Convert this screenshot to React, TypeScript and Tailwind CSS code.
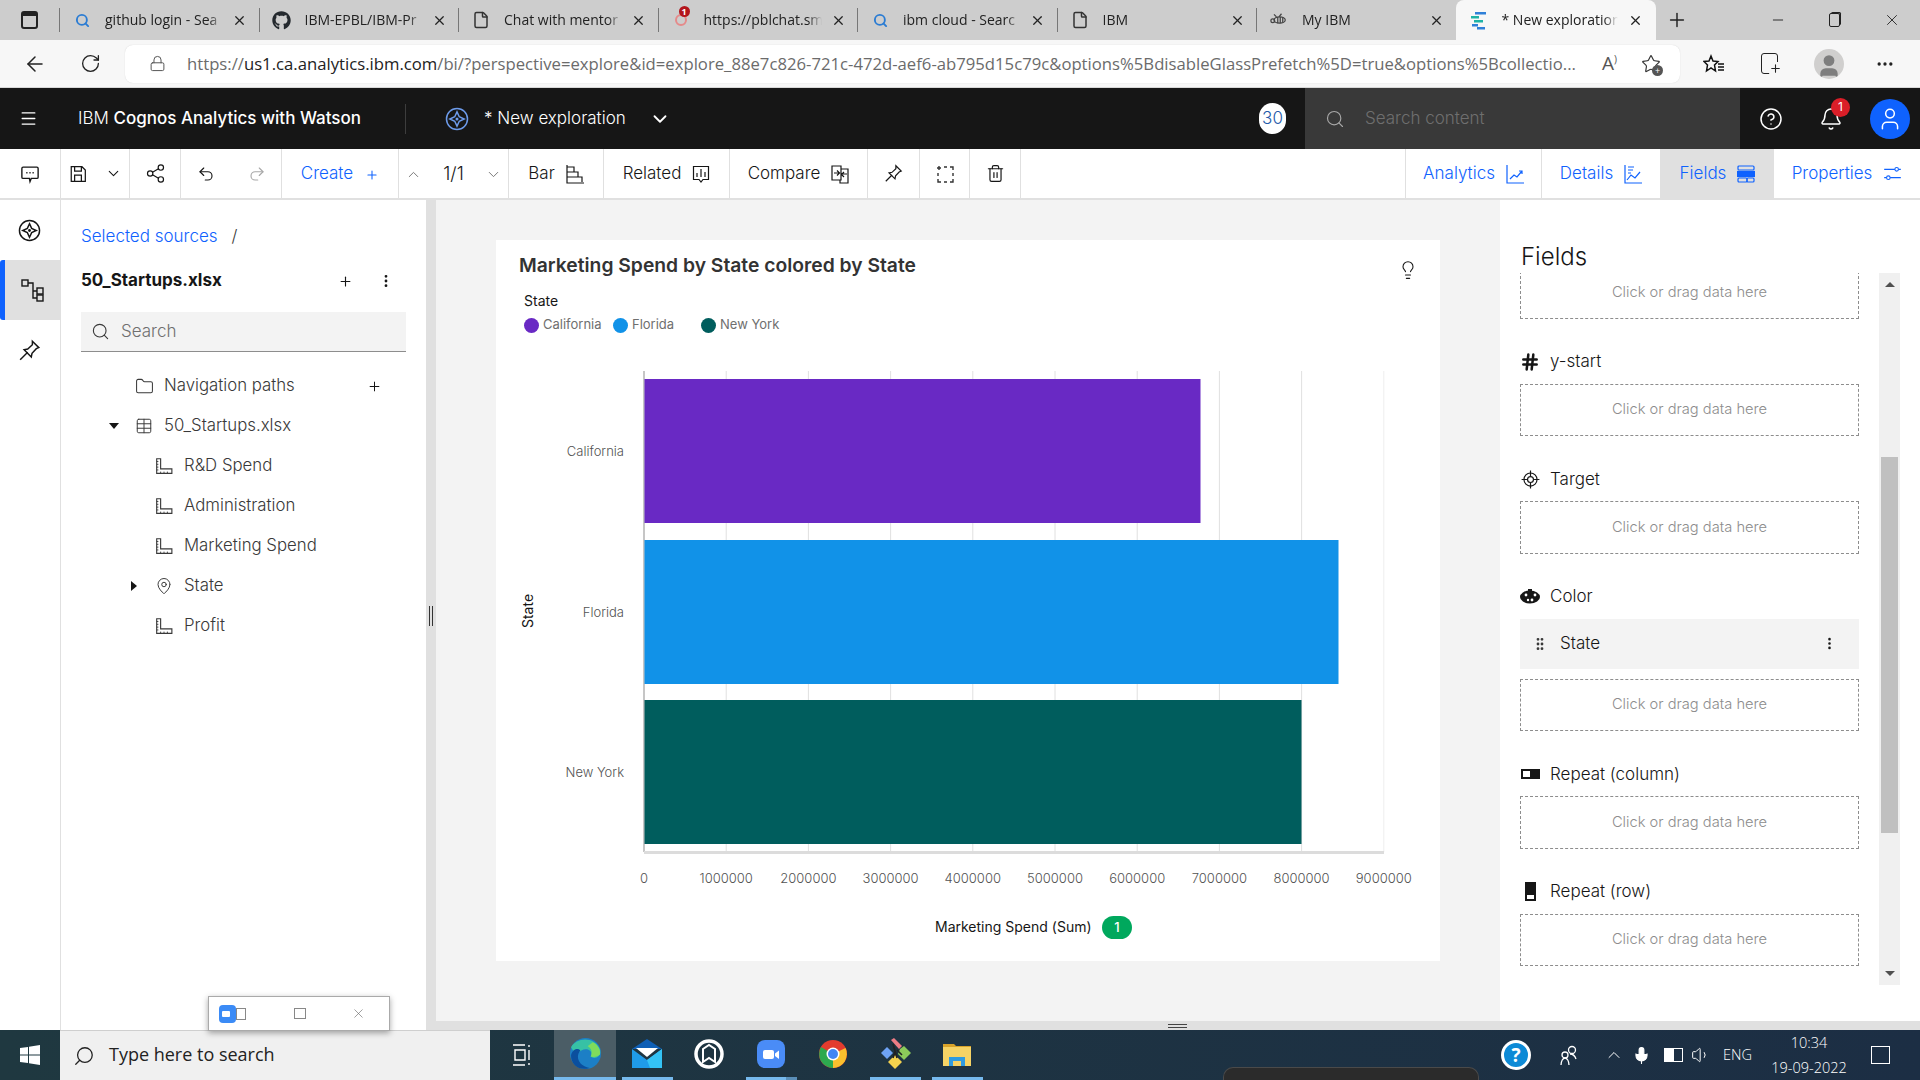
import { ChevronDown, ChevronUp, Plus, Search, X, Minus, ArrowLeft, RotateCw, Lock, Star, MoreHorizontal, Undo2, Redo2, Trash2, CircleHelp, Bell, User, Menu, MoreVertical, GripVertical, Folder, Table, MapPin, File, Lightbulb, Hash, Mic, Volume1 } from "lucide-react";
import { FaGithub } from "react-icons/fa";
import type { ReactNode } from "react";

const Ic = ({ size = 20, children, className = "" }: { size?: number; children: ReactNode; className?: string }) => (
  <svg width={size} height={size} viewBox="0 0 32 32" fill="none" stroke="currentColor" strokeWidth="2" className={className}>
    {children}
  </svg>
);

const WatsonIcon = ({ size = 24, className = "" }: { size?: number; className?: string }) => (
  <Ic size={size} className={className}>
    <circle cx="16" cy="16" r="14" />
    <path d="M16 6.500 L19 13 L25.500 16 L19 19 L16 25.500 L13 19 L6.500 16 L13 13 Z" />
    <circle cx="16" cy="16" r="1" fill="currentColor" />
  </Ic>
);

const PinIcon = ({ size = 22 }: { size?: number }) => (
  <Ic size={size}>
    <path d="M20 3l9 9-3.500 1.500-6 6.500-1 5-10-10 5-1 6.500-6z" />
    <path d="M13.500 18.500 3 29" />
  </Ic>
);

const RulerIcon = () => (
  <Ic size={18} className="text-[#393939]">
    <path d="M3 3h7v18h20v8H3z" />
    <path d="M3 8h3M3 13h3M3 18h3M3 23h3M10 29v-3M16 29v-3M22 29v-3" strokeWidth="1.6" />
  </Ic>
);

const tabs = [
  { title: "github login - Sea", icon: <Search size={15} strokeWidth={3} className="text-[#2b7cd3]" /> },
  { title: "IBM-EPBL/IBM-Pr", icon: <FaGithub size={19} className="text-[#24292e]" /> },
  { title: "Chat with mentor", icon: <File size={18} className="text-[#333]" /> },
  {
    title: "https://pblchat.sm",
    icon: (
      <span className="relative flex h-5 w-5 items-center justify-center">
        <span className="h-3 w-3 rounded-full border-2 border-[#e58a8a]" />
        <span className="absolute -top-1 left-2 flex h-[11px] w-[11px] items-center justify-center rounded-full bg-[#b3161c] text-[9px] font-bold leading-none text-white">1</span>
      </span>
    ),
  },
  { title: "ibm cloud - Searc", icon: <Search size={15} strokeWidth={3} className="text-[#2b7cd3]" /> },
  { title: "IBM", icon: <File size={18} className="text-[#333]" /> },
  {
    title: "My IBM",
    icon: (
      <Ic size={20} className="text-[#444]">
        <ellipse cx="17" cy="16" rx="9" ry="5" />
        <path d="M14 11v10M18 11v10M22 12v8M12 11 8 7M16 11l4-5" />
        <circle cx="6" cy="17" r="3" />
      </Ic>
    ),
  },
];

function TabStrip() {
  return (
    <div className="flex h-10 shrink-0 items-stretch bg-[#cdcdcd] font-['Open_Sans',sans-serif] text-[14px] text-[#222]">
      <div className="flex w-[59px] items-center justify-center">
        <span className="h-[18px] w-[17px] rounded-[3px] border-2 border-[#222] border-t-[5px]" />
      </div>
      {tabs.map((t) => (
        <div key={t.title} className="relative flex w-[199.5px] items-center">
          <span className="absolute left-0 top-[8px] h-6 w-px bg-[#777]" />
          <span className="flex w-[46px] justify-center">{t.icon}</span>
          <span className="-mt-[1px] w-[118px] overflow-hidden whitespace-nowrap [mask-image:linear-gradient(to_right,black_88%,transparent)]">{t.title}</span>
          <X size={15} className="ml-[9px]" />
        </div>
      ))}
      <div className="flex w-[200px] items-center rounded-t-lg bg-[#f7f7f7]">
        <span className="flex w-[46px] justify-center">
          <svg width="20" height="20" viewBox="0 0 20 20">
            <rect x="6" y="2" width="11" height="2.500" fill="#2f80d8" />
            <rect x="2" y="6" width="8" height="2.500" fill="#1eb3a6" />
            <rect x="5" y="10" width="9" height="2.500" fill="#1eb3a6" />
            <rect x="3" y="14" width="6" height="2.500" fill="#2f80d8" />
            <rect x="8" y="17" width="8" height="2.500" fill="#2f80d8" />
          </svg>
        </span>
        <span className="-mt-[1px] w-[116px] overflow-hidden whitespace-nowrap [mask-image:linear-gradient(to_right,black_88%,transparent)]">* New exploration</span>
        <X size={15} className="ml-[10px]" />
      </div>
      <div className="flex w-[42px] items-center justify-center">
        <Plus size={22} strokeWidth={1.6} />
      </div>
      <div className="ml-auto flex items-center">
        <span className="flex w-[57px] justify-center"><Minus size={16} strokeWidth={1.4} /></span>
        <span className="flex w-[57px] justify-center">
          <span className="h-[14px] w-[11px] rounded-[2px] border border-[#222] shadow-[1.500px_-1.500px_0_-0.500px_#222]" />
        </span>
        <span className="flex w-[57px] justify-center"><X size={18} strokeWidth={1.2} /></span>
      </div>
    </div>
  );
}

function AddressBar() {
  return (
    <div className="flex h-12 shrink-0 items-center border-b border-[#d8d8d8] bg-[#f7f7f7] font-['Open_Sans',sans-serif]">
      <span className="flex w-[70px] justify-center"><ArrowLeft size={24} strokeWidth={1.5} className="text-[#222]" /></span>
      <span className="flex w-[40px] justify-center"><RotateCw size={21} strokeWidth={1.5} className="text-[#222]" /></span>
      <div className="ml-[15px] flex h-[38px] w-[1555px] items-center rounded-lg bg-white shadow-[0_0_1px_#ccc]">
        <Lock size={17} strokeWidth={1.4} className="ml-[24px] text-[#555]" />
        <div className="ml-[21px] w-[1395px] overflow-hidden whitespace-nowrap text-[16.700px] text-[#6b6b6b]">
          https://<span className="text-[#222]">us1.ca.analytics.ibm.com</span>/bi/?perspective=explore&amp;id=explore_88e7c826-721c-472d-aef6-ab795d15c79c&amp;options%5BdisableGlassPrefetch%5D=true&amp;options%5Bcollectio...
        </div>
        <span className="ml-[20px] text-[19px] text-[#555]">A<span className="align-super text-[10px]">)</span></span>
        <span className="relative ml-[24px]">
          <Star size={20} strokeWidth={1.4} className="text-[#333]" />
          <span className="absolute -bottom-[2px] -right-[2px] flex h-[11px] w-[11px] items-center justify-center rounded-full bg-[#555] text-[9px] leading-none text-white">+</span>
        </span>
      </div>
      <span className="ml-[13px] flex w-[42px] justify-center">
        <svg width="22" height="22" viewBox="0 0 22 22" fill="none" stroke="#111" strokeWidth="1.500">
          <path d="M8 3l2 5 5 .5-3.500 3.500 1 6-4.500-3-4.500 3 1-6L1 8.500 6 8z" />
          <path d="M15 11h6M15 14h6M15 17h6" />
        </svg>
      </span>
      <span className="ml-[13px] flex w-[42px] justify-center">
        <span className="relative h-[21px] w-[17px] rounded-[3px] border-[1.500px] border-[#222]">
          <Plus size={13} className="absolute -bottom-[2px] -right-[5px] rounded-[2px] bg-[#f7f7f7] text-[#222]" />
        </span>
      </span>
      <span className="ml-[18px] flex h-[30px] w-[42px] justify-center overflow-hidden">
        <span className="flex h-[30px] w-[30px] items-end justify-center overflow-hidden rounded-full bg-[#d0cfce]">
          <User size={26} fill="#7e7e7e" stroke="#7e7e7e" />
        </span>
      </span>
      <span className="ml-[14px] flex w-[42px] justify-center"><MoreHorizontal size={20} className="text-[#222]" /></span>
    </div>
  );
}

function AppHeader() {
  return (
    <div className="flex h-[61px] shrink-0 items-center bg-[#161616] text-white">
      <span className="flex w-[56px] justify-center"><Menu size={19} strokeWidth={1.6} /></span>
      <div className="ml-[22px] w-[327px] whitespace-nowrap text-[17px]">
        <span className="font-light">IBM </span><span className="font-medium">Cognos Analytics with Watson</span>
      </div>
      <span className="h-[30px] w-px bg-[#3d3d3d]" />
      <span className="ml-[39px] flex w-[24px] justify-center"><WatsonIcon size={24} className="text-[#6d9bea]" /></span>
      <span className="ml-[15px] w-[163px] whitespace-nowrap text-[17px] font-light">* New exploration</span>
      <ChevronDown size={22} strokeWidth={2} className="ml-[2px]" />
      <div className="ml-auto flex h-full items-center">
        <span className="flex h-[31px] w-[27px] items-center justify-center rounded-full bg-white text-[17px] font-light text-[#2459a9]">30</span>
        <div className="ml-[19px] flex h-full w-[435px] items-center bg-[#393939] text-[17px] font-light text-[#6f6f6f]">
          <Search size={20} strokeWidth={1.4} className="ml-[20px] text-[#a8a8a8]" />
          <span className="ml-[20px] mt-[1px]">Search content</span>
        </div>
        <span className="flex w-[62px] justify-center"><CircleHelp size={24} strokeWidth={1.5} /></span>
        <span className="relative flex w-[58px] justify-center">
          <Bell size={24} strokeWidth={1.5} />
          <span className="absolute -top-[9px] left-[29px] flex h-[19px] w-[19px] items-center justify-center rounded-full bg-[#da1e28] text-[12px]">1</span>
        </span>
        <span className="ml-[10px] mr-[10px] flex h-10 w-10 items-center justify-center rounded-full bg-[#0f62fe]">
          <User size={26} strokeWidth={1.4} />
        </span>
      </div>
    </div>
  );
}

const Cell = ({ w, children, className = "" }: { w: string; children?: ReactNode; className?: string }) => (
  <div className={`flex h-full shrink-0 items-center justify-center border-r border-[#e0e0e0] text-[17px] font-light ${w} ${className}`}>{children}</div>
);

function Toolbar() {
  return (
    <div className="flex h-[51px] shrink-0 items-stretch border-b-2 border-[#e0e0e0] bg-white text-[#161616]">
      <Cell w="w-[61px]">
        <Ic size={20}>
          <path d="M5 5h22a2 2 0 0 1 2 2v14a2 2 0 0 1-2 2H18l-2 5-1-5H5a2 2 0 0 1-2-2V7a2 2 0 0 1 2-2z" strokeWidth="2.200" />
          <path d="M10 14h2M15 14h2M20 14h2" strokeWidth="2.400" />
        </Ic>
      </Cell>
      <Cell w="w-[69px]" className="gap-[18px]">
        <Ic size={18}>
          <path d="M4 3h19l6 6v20H4zM10 3v8h12V3M10 29V18h12v11" strokeWidth="2.200" />
        </Ic>
        <ChevronDown size={17} strokeWidth={1.5} />
      </Cell>
      <Cell w="w-[51px]">
        <Ic size={19}>
          <circle cx="7" cy="16" r="4.500" /><circle cx="25" cy="6" r="4.500" /><circle cx="25" cy="26" r="4.500" />
          <path d="M11 14l10-6M11 18l10 6" />
        </Ic>
      </Cell>
      <Cell w="w-[101px]" className="gap-[33px]">
        <Undo2 size={18} strokeWidth={1.5} />
        <Redo2 size={18} strokeWidth={1.5} className="text-[#a8a8a8]" />
      </Cell>
      <Cell w="w-[117px]" className="gap-[12px] text-[#0f62fe]">
        <span>Create</span><Plus size={14} strokeWidth={1.8} className="mt-[3px]" />
      </Cell>
      <Cell w="w-[110px]" className="gap-[21px]">
        <ChevronUp size={17} strokeWidth={1.3} className="mt-[2px] text-[#6f6f6f]" />
        <span className="text-[18px]">1/1</span>
        <ChevronDown size={17} strokeWidth={1.3} className="mt-[2px] text-[#6f6f6f]" />
      </Cell>
      <Cell w="w-[95px]" className="gap-[11px]">
        <span className="mt-[1px]">Bar</span>
        <svg width="18" height="20" viewBox="0 0 18 20" fill="none" stroke="#161616" strokeWidth="1.200">
          <path d="M1 1v18h17M1 3h7v5H1M1 8h11v5H1M1 13h15v5" />
        </svg>
      </Cell>
      <Cell w="w-[126px]" className="gap-[11px]">
        <span className="mt-[1px]">Related</span>
        <svg width="18" height="20" viewBox="0 0 18 20" fill="none" stroke="#161616" strokeWidth="1.200">
          <path d="M1.500 2.500h15v13H11l-2 2.500-2-2.500H1.500zM5 13V9M9 13V5M13 13V8" />
        </svg>
      </Cell>
      <Cell w="w-[138px]" className="gap-[11px]">
        <span className="mt-[1px]">Compare</span>
        <svg width="18" height="20" viewBox="0 0 18 20" fill="none" stroke="#161616" strokeWidth="1.200">
          <path d="M1 2h9v14H1zM10 5h7v14H9v-3M3 9h5M6 6.500 8.500 9 6 11.500M16 10h-5M13 8l-2.500 2.500L13 13" />
        </svg>
      </Cell>
      <Cell w="w-[52px]"><PinIcon size={19} /></Cell>
      <Cell w="w-[50px]">
        <svg width="18" height="18" viewBox="0 0 18 18" fill="none" stroke="#333" strokeWidth="1.400">
          <path d="M3 1v4M1 3h4M8 2h3M14 2h3v3M17 8v3M17 14v3h-3M11 17H8M5 17H2v-3M2 11V8" />
        </svg>
      </Cell>
      <Cell w="w-[51px]"><Trash2 size={19} strokeWidth={1.5} /></Cell>
      <div className="flex-1" />
      <Cell w="w-[137px]" className="gap-[11px] border-l text-[#0f62fe]">
        <span>Analytics</span>
        <svg width="18" height="20" viewBox="0 0 18 20" fill="none" stroke="#0f62fe" strokeWidth="1.200">
          <path d="M1 1v18h17M4 15l4-4 3 2 5-6M13 7h3v3" />
        </svg>
      </Cell>
      <Cell w="w-[119px]" className="gap-[11px] text-[#0f62fe]">
        <span>Details</span>
        <svg width="18" height="20" viewBox="0 0 18 20" fill="none" stroke="#0f62fe" strokeWidth="1.200">
          <path d="M1 1v18h17M4 3h6M4 6h5M4 9h3M3 16l4-5 4 3 5-6" />
        </svg>
      </Cell>
      <div className="flex h-full w-[113px] shrink-0 items-center justify-center gap-[11px] bg-[#e0e0e0] text-[17px] font-light text-[#0f62fe]">
        <span>Fields</span>
        <svg width="18" height="18" viewBox="0 0 18 18" fill="none" stroke="#0f62fe" strokeWidth="1.200">
          <rect x="1" y="1" width="16" height="4" rx="1" />
          <rect x="0.500" y="6.500" width="17" height="5" fill="#0f62fe" />
          <rect x="1" y="13" width="9" height="4" rx="1" />
          <rect x="10" y="13" width="7" height="4" rx="1" />
        </svg>
      </div>
      <div className="flex h-full w-[146px] shrink-0 items-center justify-center gap-[11px] text-[17px] font-light text-[#0f62fe]">
        <span>Properties</span>
        <Ic size={19}><path d="M2 9h18M26 9h4M2 23h4M12 23h18" strokeWidth="1.800" /><circle cx="23" cy="9" r="3" strokeWidth="1.800" /><circle cx="9" cy="23" r="3" strokeWidth="1.800" /></Ic>
      </div>
    </div>
  );
}

function LeftRail() {
  return (
    <div className="flex w-[61px] shrink-0 flex-col items-stretch border-r border-[#e0e0e0] bg-white text-[#161616]">
      <div className="flex h-[60px] items-center justify-center pr-[1px]"><WatsonIcon size={23} /></div>
      <div className="flex h-[60px] items-center justify-center rounded-l-[3px] border-l-[5px] border-[#0f62fe] bg-[#e0e0e0]">
        <svg width="23" height="23" viewBox="0 0 23 23" fill="none" stroke="#161616" strokeWidth="1.400">
          <rect x="1" y="1" width="6" height="6" />
          <rect x="16" y="9" width="6" height="6" />
          <rect x="16" y="16" width="6" height="6" />
          <path d="M7 4h5v15h4M12 12h4" />
        </svg>
      </div>
      <div className="flex h-[60px] items-center justify-center pr-[1px]"><PinIcon size={23} /></div>
    </div>
  );
}

const TreeRow = ({ indent, caret, icon, label, plus }: { indent: string; caret?: "down" | "right"; icon: ReactNode; label: string; plus?: boolean }) => (
  <div className={`flex h-10 items-center text-[16.800px] font-light text-[#393939] ${indent}`}>
    <span className="flex w-[30px] shrink-0 justify-center pr-[10px]">
      {caret === "down" && <span className="h-0 w-0 border-x-[5px] border-t-[6px] border-x-transparent border-t-[#161616]" />}
      {caret === "right" && <span className="h-0 w-0 border-y-[5px] border-l-[6px] border-y-transparent border-l-[#161616]" />}
    </span>
    <span className="flex w-[20px] shrink-0 justify-center">{icon}</span>
    <span className="ml-[10px] whitespace-nowrap">{label}</span>
    {plus && <Plus size={15} strokeWidth={1.6} className="ml-auto mr-[24px] text-[#161616]" />}
  </div>
);

function SourcesPanel() {
  return (
    <div className="flex w-[365px] shrink-0 flex-col bg-white pl-[20px] pr-[20px] pt-[22px]">
      <div className="flex h-[30px] items-center text-[17px] font-light">
        <span className="text-[#0f62fe]">Selected sources</span>
        <span className="ml-[14px] text-[#393939]">/</span>
      </div>
      <div className="mt-[14px] flex h-[30px] items-center text-[17px] font-bold text-[#161616]">
        <span>50_Startups.xlsx</span>
        <Plus size={15} strokeWidth={1.8} className="ml-auto mr-[25px]" />
        <MoreVertical size={16} strokeWidth={2.2} className="mr-[12px]" />
      </div>
      <div className="mt-[16px] flex h-10 items-center border-b border-[#8d8d8d] bg-[#f3f3f3] text-[17px] font-light text-[#6f6f6f]">
        <Search size={19} strokeWidth={1.4} className="ml-[10px] text-[#393939]" />
        <span className="ml-[11px]">Search</span>
      </div>
      <div className="mt-[14px]">
        <TreeRow indent="ml-[23px]" icon={<Folder size={19} strokeWidth={1.3} />} label="Navigation paths" plus />
        <TreeRow indent="ml-[23px]" caret="down" icon={<Table size={18} strokeWidth={1.3} />} label="50_Startups.xlsx" />
        <TreeRow indent="ml-[43px]" icon={<RulerIcon />} label="R&D Spend" />
        <TreeRow indent="ml-[43px]" icon={<RulerIcon />} label="Administration" />
        <TreeRow indent="ml-[43px]" icon={<RulerIcon />} label="Marketing Spend" />
        <TreeRow indent="ml-[43px]" caret="right" icon={<MapPin size={18} strokeWidth={1.3} />} label="State" />
        <TreeRow indent="ml-[43px]" icon={<RulerIcon />} label="Profit" />
      </div>
    </div>
  );
}

const xTicks = [0, 1000000, 2000000, 3000000, 4000000, 5000000, 6000000, 7000000, 8000000, 9000000];
const bars = [
  { label: "California", y: 18, w: 556, color: "#6929c4" },
  { label: "Florida", y: 179, w: 694, color: "#1192e8" },
  { label: "New York", y: 339, w: 657, color: "#005d5d" },
];

function ChartCard() {
  const gx = (i: number) => 148 + i * 82.2;
  return (
    <div className="ml-[60px] mt-[40px] flex h-[721px] w-[944px] flex-col bg-white">
      <div className="flex h-[50px] items-center justify-between pl-[23px] pr-[22px]">
        <span className="text-[19.300px] font-semibold text-[#333]">Marketing Spend by State colored by State</span>
        <Lightbulb size={20} strokeWidth={1.3} className="mt-[9px] text-[#161616]" />
      </div>
      <div className="ml-[28px] mt-[1px] text-[14px] leading-5 text-[#161616]">State</div>
      <div className="ml-[28px] mt-[4px] flex h-5 items-center text-[13px] text-[#6f6f6f]">
        <span className="h-[15px] w-[15px] rounded-full bg-[#6929c4]" />
        <span className="ml-[4px] w-[70px]">California</span>
        <span className="h-[15px] w-[15px] rounded-full bg-[#1192e8]" />
        <span className="ml-[4px] w-[69px]">Florida</span>
        <span className="h-[15px] w-[15px] rounded-full bg-[#005d5d]" />
        <span className="ml-[4px]">New York</span>
      </div>
      <svg width="944" height="600" className="mt-[26px] block">
        {xTicks.map((t, i) => (
          <g key={t}>
            <line x1={gx(i)} x2={gx(i)} y1="10" y2="491" stroke={i === 0 ? "#8d8d8d" : i === 9 ? "#eeeeee" : "#e0e0e0"} strokeWidth="1" />
            <text x={gx(i)} y="522" textAnchor="middle" fontSize="13" fontWeight="300" fill="#525252">{t}</text>
          </g>
        ))}
        <rect x="148" y="490" width="740" height="3" fill="#dcdcdc" />
        {bars.map((b) => (
          <g key={b.label}>
            <rect x="148.500" y={b.y} width={b.w} height="144" fill={b.color} />
            <text x="128" y={b.y + 77} textAnchor="end" fontSize="13" fontWeight="300" fill="#525252">{b.label}</text>
          </g>
        ))}
        <text transform="translate(37 250) rotate(-90)" textAnchor="middle" fontSize="14" fill="#161616">State</text>
        <text x="439" y="571" fontSize="14" fill="#161616">Marketing Spend (Sum)</text>
        <rect x="606" y="555" width="30" height="23" rx="11.500" fill="#00a85d" />
        <text x="621" y="571" textAnchor="middle" fontSize="13" fontWeight="500" fill="#fff">1</text>
      </svg>
    </div>
  );
}

const DropBox = ({ className = "h-[52.500px] border" }: { className?: string }) => (
  <div className={`flex items-center justify-center border-dashed border-[#8d8d8d] pb-[1px] text-[14.700px] font-light text-[#8d8d8d] ${className}`}>Click or drag data here</div>
);

const WellLabel = ({ icon, label }: { icon: ReactNode; label: string }) => (
  <div className="mb-[10px] mt-[31px] flex h-6 items-center text-[17px] font-light text-[#161616]">
    <span className="flex w-[20px] justify-center">{icon}</span>
    <span className="ml-[10px] mt-[1px]">{label}</span>
  </div>
);

function FieldsPanel() {
  return (
    <div className="flex w-[420px] shrink-0 flex-col bg-white">
      <div className="flex h-[73px] items-end pl-[21px] text-[24px] font-light leading-[32px] text-[#161616]">Fields</div>
      <div className="flex h-[712px] pl-[20px]">
        <div className="w-[339px] overflow-hidden">
          <DropBox className="-mt-[7px] h-[52.500px] border" />
          <WellLabel icon={<Hash size={20} strokeWidth={3} />} label="y-start" />
          <DropBox />
          <WellLabel
            icon={
              <Ic size={19}>
                <circle cx="16" cy="16" r="11" /><circle cx="16" cy="16" r="5" /><path d="M16 1v9M16 22v9M1 16h9M22 16h9" />
              </Ic>
            }
            label="Target"
          />
          <DropBox />
          <WellLabel
            icon={
              <svg width="20" height="16" viewBox="0 0 20 16">
                <ellipse cx="10" cy="8" rx="10" ry="6.500" fill="#161616" />
                <path d="M8 0 h4 l0 6 h-4 z" fill="#161616" />
                <circle cx="6" cy="6" r="1.400" fill="#fff" /><circle cx="12" cy="11" r="1.400" fill="#fff" /><circle cx="15" cy="6" r="1.400" fill="#fff" /><circle cx="8" cy="11" r="1.200" fill="#fff" />
              </svg>
            }
            label="Color"
          />
          <div className="flex h-[50px] items-center bg-[#f3f3f3] text-[17px] font-light text-[#161616]">
            <GripVertical size={16} strokeWidth={2.2} className="ml-[12px] text-[#393939]" />
            <span className="ml-[12px] mt-[1px]">State</span>
            <MoreVertical size={15} strokeWidth={2.2} className="ml-auto mr-[22px]" />
          </div>
          <DropBox className="mt-[10px] h-[52.500px] border" />
          <WellLabel
            icon={
              <span className="flex h-[10px] w-[19px]">
                <i className="w-[11px] border-2 border-[#161616]" /><i className="w-[8px] bg-[#161616]" />
              </span>
            }
            label="Repeat (column)"
          />
          <DropBox />
          <WellLabel
            icon={
              <span className="flex h-[19px] w-[11px] flex-col">
                <i className="h-[11px] bg-[#161616]" /><i className="h-[8px] border-2 border-[#161616]" />
              </span>
            }
            label="Repeat (row)"
          />
          <DropBox />
        </div>
        <div className="relative ml-[20px] w-[21px] bg-[#f0f0f0]">
          <span className="absolute left-[6px] top-[9px] h-0 w-0 border-x-[5px] border-b-[5px] border-x-transparent border-b-[#505050]" />
          <span className="absolute left-[2px] top-[184px] h-[376px] w-[17px] bg-[#c0c0c0]" />
          <span className="absolute bottom-[9px] left-[6px] h-0 w-0 border-x-[5px] border-t-[5px] border-x-transparent border-t-[#505050]" />
        </div>
      </div>
    </div>
  );
}

const TaskIcon = ({ children, active, line, extra }: { children: ReactNode; active?: boolean; line?: boolean; extra?: boolean }) => (
  <div className={`relative flex w-[62px] shrink-0 items-center justify-center pb-[3px] ${active ? "bg-[#4b5d66]" : ""}`}>
    {children}
    {active && <span className="absolute inset-x-0 bottom-0 h-[3px] bg-[#76b9ed]" />}
    {line && !active && <span className={`absolute bottom-0 left-[6px] h-[3px] bg-[#76b9ed] ${extra ? "w-10" : "w-[51px]"}`} />}
    {extra && <span className="absolute bottom-0 left-[46px] h-[3px] w-[11px] bg-[#5a8fb8]" />}
  </div>
);

function Taskbar() {
  return (
    <div className="relative flex h-[50px] shrink-0 items-stretch bg-gradient-to-r from-[#1f3840] to-[#1c2e44] font-['Open_Sans',sans-serif] text-white">
      <div className="flex w-[60px] items-center justify-center">
        <svg width="20" height="20" viewBox="0 0 20 20" fill="#fff">
          <path d="M0 3l8-1v7.500H0zM9 1.800L20 0v9.500H9zM0 10.500h8V18l-8-1zM9 10.500h11V20L9 18.200z" />
        </svg>
      </div>
      <div className="flex w-[430px] items-center border-t border-[#cfcfcf] bg-[#f0f0f0] text-[18px] text-[#222]">
        <Search size={22} strokeWidth={1.4} className="ml-[13px] -scale-x-100" />
        <span className="-mt-[2px] ml-[14px]">Type here to search</span>
      </div>
      <div className="flex w-[64px] items-center justify-center">
        <svg width="20" height="22" viewBox="0 0 20 22" fill="none" stroke="#fff" strokeWidth="1.400">
          <path d="M1 1h12M3 6h10v10H3zM1 21h12M17 1v2M17 6v10M17 19v2" />
        </svg>
      </div>
      <TaskIcon active>
        <svg width="31" height="31" viewBox="0 0 30 30">
          <circle cx="15" cy="15" r="15" fill="#1c7fc6" />
          <path d="M1 9C6-1 24-2 29 11c2 8-6 10-9 7 3-6-4-9-9-6-4 3-7 3-10-3z" fill="#37c1a5" />
          <path d="M22 4c5 2 8 8 7 12-2 2-6 3-9 2 2-4 1-8-3-10z" fill="#7fdc5c" />
          <path d="M10 12c-5 6-2 15 9 17-9 3-18-2-18-12 1-6 6-8 9-5z" fill="#0b4f9e" />
        </svg>
      </TaskIcon>
      <TaskIcon line>
        <svg width="30" height="29" viewBox="0 0 30 29">
          <path d="M0 10L15 0l15 10z" fill="#0f5fb5" />
          <path d="M4 9h22l-11 9z" fill="#fff" />
          <path d="M0 10l15 11 15-11v19H0z" fill="#1f9be9" />
          <path d="M15 21l15-11v19H18z" fill="#34c3f5" />
        </svg>
      </TaskIcon>
      <TaskIcon>
        <svg width="30" height="30" viewBox="0 0 30 30" fill="none">
          <circle cx="15" cy="15" r="13" stroke="#fff" strokeWidth="3.500" />
          <path d="M9 23V10l6-4 6 4v13l-6-4z" stroke="#fff" strokeWidth="2" />
        </svg>
      </TaskIcon>
      <TaskIcon line extra>
        <svg width="28" height="28" viewBox="0 0 28 28">
          <rect width="28" height="28" rx="8" fill="#4a8cf7" />
          <rect x="6" y="10" width="11" height="9" rx="2" fill="#fff" />
          <path d="M18 13.500l4-3v8.500l-4-3z" fill="#fff" />
        </svg>
      </TaskIcon>
      <TaskIcon>
        <svg width="28" height="28" viewBox="0 0 28 28">
          <circle cx="14" cy="14" r="14" fill="#e33b2e" />
          <path d="M14 14 L2 7 A14 14 0 0 0 14 28z" fill="#2da94f" />
          <path d="M14 14 L14 28 A14 14 0 0 0 26.500 8z" fill="#fbc02d" />
          <circle cx="14" cy="14" r="6.500" fill="#fff" />
          <circle cx="14" cy="14" r="5" fill="#4285f4" />
        </svg>
      </TaskIcon>
      <TaskIcon line>
        <svg width="31" height="31" viewBox="0 0 31 31">
          <path d="M1 15l6-6 6 6-6 6z" fill="#6ea3f5" />
          <path d="M11 2l3-2 8 8-3 3z" fill="#ee7d85" />
          <path d="M20 11l4-3 7 7-7 7-6-6z" fill="#8ccb5a" />
          <path d="M15 31l-7-7 7-7 7 7z" fill="#f4d24e" />
          <path d="M13 6l4 14M15 14l-2 6M17 12l5 5" stroke="#222" strokeWidth="1.600" fill="none" />
        </svg>
      </TaskIcon>
      <TaskIcon line>
        <svg width="28" height="24" viewBox="0 0 28 24">
          <path d="M0 2h11l2 2h15v20H0z" fill="#d9a32a" />
          <rect y="5" width="28" height="19" fill="#f6d365" />
          <path d="M6 24v-9h16v9h-4v-5h-8v5z" fill="#2f9be0" />
        </svg>
      </TaskIcon>
      <div className="flex flex-1 items-center text-[14px]">
        <span className="ml-[513px] flex h-[30px] w-[30px] items-center justify-center rounded-full border-[3px] border-white bg-[#0d8ad6] text-[19px] font-bold leading-none">?</span>
        <svg width="22" height="22" viewBox="0 0 22 22" fill="none" stroke="#fff" strokeWidth="1.300" className="ml-[27px]">
          <circle cx="14" cy="6" r="3.500" /><circle cx="7" cy="11" r="3" /><path d="M3 21c0-4 2-7 4-7s4 3 4 7M12 10c3 0 5 2 6 5" />
        </svg>
        <ChevronUp size={20} strokeWidth={1.2} className="ml-[24px]" />
        <Mic size={19} strokeWidth={1.4} fill="#fff" className="ml-[8px]" />
        <span className="relative ml-[13px] h-[14px] w-[19px] border border-white"><i className="absolute inset-y-0 left-0 w-[9px] bg-white" /></span>
        <Volume1 size={20} strokeWidth={1.2} className="ml-[8px]" />
        <span className="ml-[12px] w-[32px] text-[14.500px] font-light">ENG</span>
        <div className="ml-[16px] flex w-[76px] flex-col items-center text-[14.500px] font-light leading-[25px]">
          <span>10:34</span>
          <span className="whitespace-nowrap">19-09-2022</span>
        </div>
        <span className="ml-[24px] h-[18px] w-[19px] border border-white" />
      </div>
      <span className="absolute bottom-0 left-[1223px] h-[13px] w-[256px] rounded-t-[10px] border border-b-0 border-[#4a4a4a] bg-[#2b2b2b]" />
    </div>
  );
}

function ZoomWindow() {
  return (
    <div className="absolute left-[208px] top-[996px] flex h-[35px] w-[182px] items-center border border-[#aaaaaa] bg-white shadow-[0_2px_6px_rgba(0,0,0,0.35)]">
      <span className="relative ml-[10px] h-[18px] w-[17px] rounded-[4px] bg-[#3b8bf6]">
        <i className="absolute left-[3px] top-[6px] h-[6px] w-[8px] rounded-[1px] bg-white" />
        <i className="absolute -right-[10px] top-[3px] h-[12px] w-[10px] border border-[#888] bg-white" />
      </span>
      <span className="ml-[58px] h-[11px] w-[12px] border border-[#888]" />
      <X size={15} strokeWidth={1} className="ml-[45px] text-[#666]" />
    </div>
  );
}

export default function App() {
  return (
    <div className="relative flex h-[1080px] w-[1920px] flex-col overflow-hidden bg-white font-[Inter,sans-serif]">
      <TabStrip />
      <AddressBar />
      <AppHeader />
      <Toolbar />
      <div className="flex h-[830px] shrink-0">
        <LeftRail />
        <SourcesPanel />
        <div className="relative w-[10px] shrink-0 bg-[#e0e0e0]">
          <span className="absolute left-[3px] top-[406px] h-5 w-[4px] border-x border-[#333]" />
        </div>
        <div className="flex min-w-0 flex-1 flex-col">
          <div className="flex h-[821px] shrink-0">
            <div className="w-[1064px] shrink-0 bg-[#f3f3f3]">
              <ChartCard />
            </div>
            <FieldsPanel />
          </div>
          <div className="relative flex-1 bg-[#e0e0e0]">
            <span className="absolute left-[732px] top-[3px] h-[4px] w-[19px] border-y border-[#444]" />
          </div>
        </div>
      </div>
      <Taskbar />
      <ZoomWindow />
    </div>
  );
}
